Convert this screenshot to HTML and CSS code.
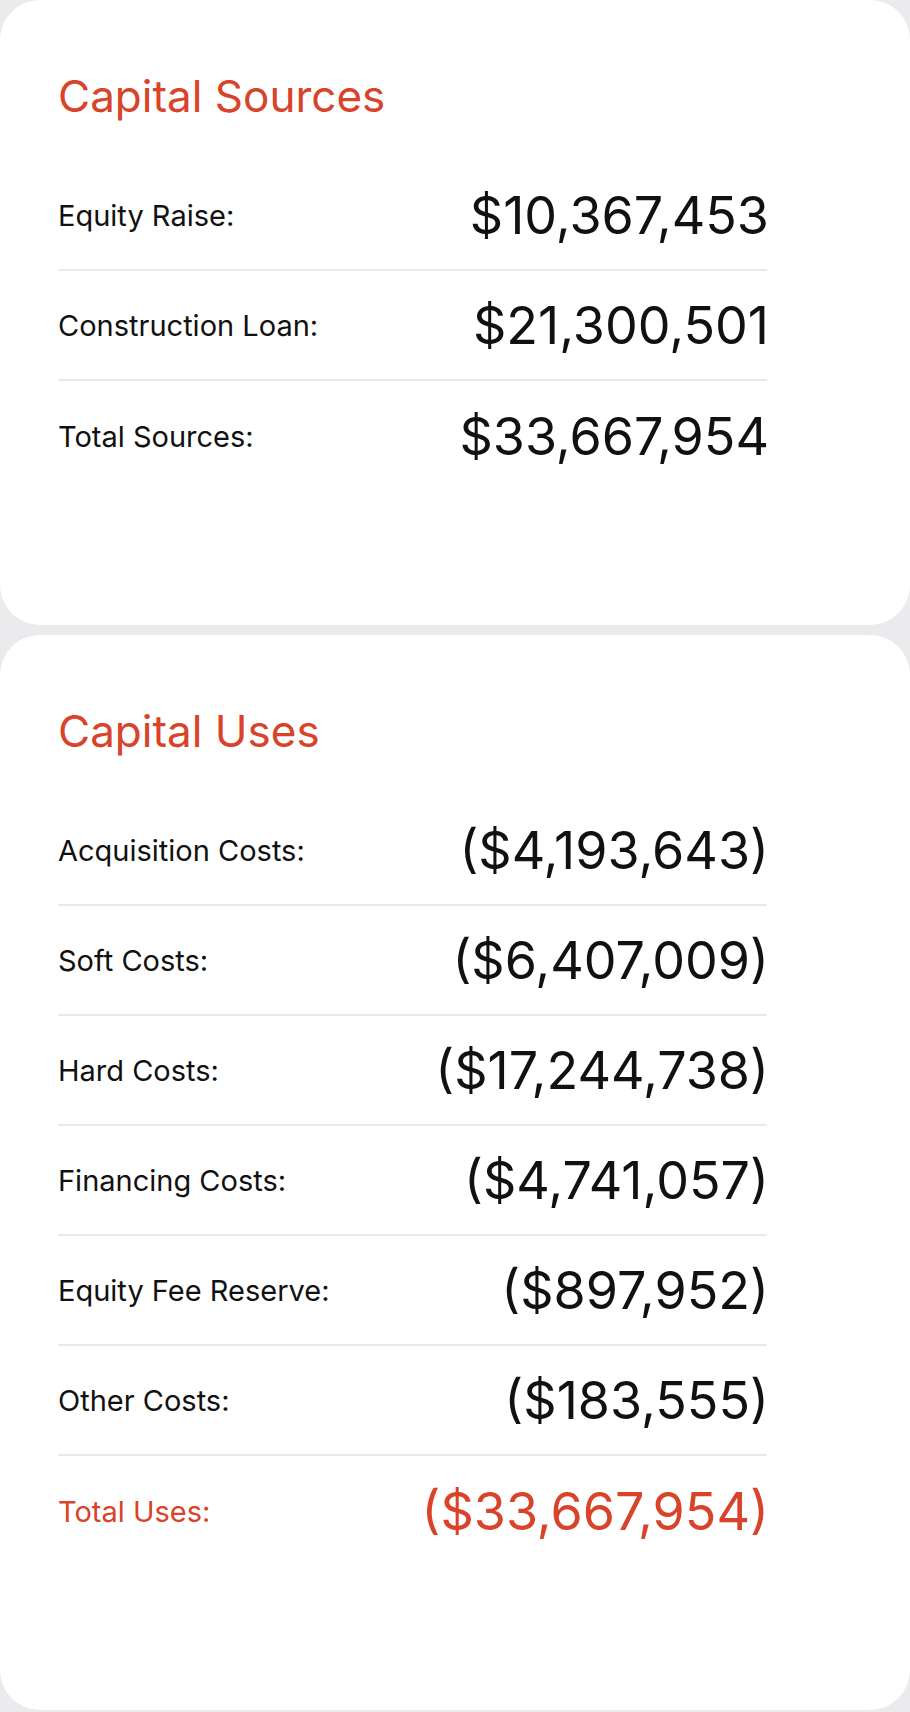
FILE: index.html
```html
<!DOCTYPE html>
<html lang="en">

<head>
    <meta charset="UTF-8">
    <meta name="viewport" content="width=device-width, initial-scale=1.0">
    <title>Capital Stack</title>
    <link rel="stylesheet" href="styles.css">
</head>

<body>
    <div class="card card-sources">
        <h2 class="card-title">Capital Sources</h2>

        <div class="row">
            <span class="row-label">Equity Raise:</span>
            <span class="row-value">$10,367,453</span>
        </div>
        <div class="row">
            <span class="row-label">Construction Loan:</span>
            <span class="row-value">$21,300,501</span>
        </div>
        <div class="row">
            <span class="row-label">Total Sources:</span>
            <span class="row-value">$33,667,954</span>
        </div>
    </div>

    <div class="card card-uses">
        <h2 class="card-title">Capital Uses</h2>

        <div class="row">
            <span class="row-label">Acquisition Costs:</span>
            <span class="row-value">($4,193,643)</span>
        </div>
        <div class="row">
            <span class="row-label">Soft Costs:</span>
            <span class="row-value">($6,407,009)</span>
        </div>
        <div class="row">
            <span class="row-label">Hard Costs:</span>
            <span class="row-value">($17,244,738)</span>
        </div>
        <div class="row">
            <span class="row-label">Financing Costs:</span>
            <span class="row-value">($4,741,057)</span>
        </div>
        <div class="row">
            <span class="row-label">Equity Fee Reserve:</span>
            <span class="row-value">($897,952)</span>
        </div>
        <div class="row">
            <span class="row-label">Other Costs:</span>
            <span class="row-value">($183,555)</span>
        </div>
        <div class="row row-total">
            <span class="row-label">Total Uses:</span>
            <span class="row-value">($33,667,954)</span>
        </div>
    </div>
</body>

</html>
```

FILE: styles.css
```css
body {
    font-family: Inter, "Noto Sans", sans-serif;
    margin: 0;
    padding: 0;
    background-color: #ebebed;
    color: #111;
}

.card {
    background-color: #fff;
    border-radius: 40px;
    padding: 70px 141px 134px 58px;
}

.card-uses {
    margin-top: 10px;
    padding-bottom: 144px;
}

.card-title {
    margin: 0 0 39px 0;
    font-size: 44px;
    line-height: 52px;
    font-weight: 400;
    color: #d8432a;
}

.row {
    display: flex;
    justify-content: space-between;
    align-items: center;
    height: 110px;
    box-sizing: border-box;
    border-bottom: 2px solid #e9e9eb;
    margin-right: 2px;
}

.row:last-child {
    border-bottom: none;
}

.row-label {
    font-size: 29px;
}

.row-value {
    font-size: 52px;
    margin-right: -2px;
}

.row-total {
    color: #d8432a;
}
```
